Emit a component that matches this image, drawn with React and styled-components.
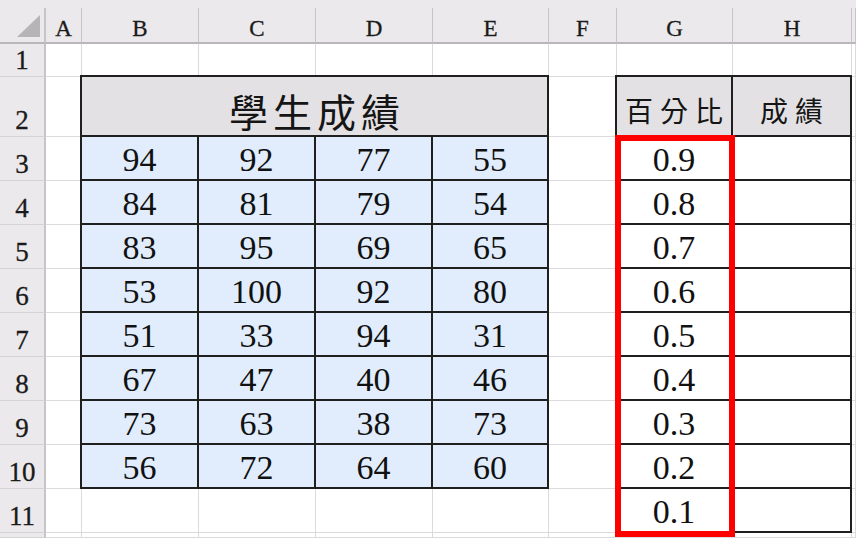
import React from "react";
import styled, { createGlobalStyle, css } from "styled-components";

const Global = createGlobalStyle`
  html, body { margin: 0; padding: 0; background: #ffffff; }
  body { overflow: hidden; }
`;

const DARK = "#1f1f1f";
const GRID = "#dcdadc";
const HEAD_BG = "#ebe9eb";
const HEAD_LINE = "#c6c4c6";

const Sheet = styled.div`
  position: relative;
  width: 856px;
  height: 538px;
  overflow: hidden;
  display: grid;
  grid-template-columns: 46px 36px 117px 117px 117px 116px 68px 116px 119px 1fr;
  grid-template-rows: 8px 36px 33px 60px repeat(9, 44px) 1fr;
  background: #ffffff;
  font-family: "Liberation Serif", "Times New Roman", serif;
  color: #111;
`;

const TopStrip = styled.div`
  grid-column: 1 / -1;
  background: ${HEAD_BG};
`;

const Corner = styled.div`
  background: ${HEAD_BG};
  border-right: 2px solid ${HEAD_LINE};
  border-bottom: 2px solid #b9b7b9;
  box-sizing: border-box;
  display: flex;
  align-items: flex-end;
  justify-content: flex-end;
  padding: 0 4px 5px 0;
`;

const Triangle = styled.div`
  width: 0;
  height: 0;
  border-left: 23px solid transparent;
  border-bottom: 22px solid #b6b4b6;
`;

const ColHead = styled.div`
  background: ${HEAD_BG};
  border-right: 1px solid ${HEAD_LINE};
  border-bottom: 2px solid #b9b7b9;
  box-sizing: border-box;
  display: flex;
  align-items: flex-end;
  justify-content: center;
  padding-bottom: 0;
  font-size: 23px;
  line-height: 26px;
  color: #1a1a1a;
  -webkit-text-stroke: 0.3px #1a1a1a;
`;

const RowHead = styled.div`
  background: ${HEAD_BG};
  border-right: 2px solid ${HEAD_LINE};
  border-bottom: 1px solid #d4d2d4;
  box-sizing: border-box;
  display: flex;
  align-items: flex-end;
  justify-content: center;
  padding-bottom: 2px;
  font-size: 27px;
  line-height: 28px;
  color: #1a1a1a;
  -webkit-text-stroke: 0.3px #1a1a1a;
`;

const fills = {
  title: "#e3e1e4",
  data: "#e1edfc",
  none: "#ffffff",
};

const Cell = styled.div`
  box-sizing: border-box;
  background: ${(p) => fills[p.$fill || "none"]};
  border-right: 1px solid ${GRID};
  border-bottom: 1px solid ${GRID};
  display: flex;
  align-items: flex-end;
  justify-content: center;
  padding-bottom: ${(p) => p.$pb ?? 1}px;
  font-size: 34px;
  line-height: 37px;
  min-width: 0;
  white-space: nowrap;
  ${(p) => p.$span && css`grid-column: span ${p.$span};`}
  ${(p) =>
    p.$box &&
    css`
      border-right: 2px solid ${DARK};
      border-bottom: 2px solid ${DARK};
    `}
  ${(p) =>
    p.$box &&
    (p.$top || p.$left) &&
    css`
      box-shadow: ${p.$left ? "-2px" : "0"} ${p.$top ? "-2px" : "0"} 0 0 ${DARK};
    `}
  ${(p) =>
    p.$box &&
    p.$top &&
    p.$left &&
    css`
      box-shadow: -2px 0 0 0 ${DARK}, 0 -2px 0 0 ${DARK}, -2px -2px 0 0 ${DARK};
    `}
`;

const Cjk = styled.span`
  font-family: "Noto Sans CJK TC", "Noto Sans CJK SC", sans-serif;
  font-size: ${(p) => p.$size}px;
  letter-spacing: ${(p) => p.$gap}px;
  margin-right: -${(p) => p.$gap}px;
  line-height: 1.1;
  color: #151515;
`;

const RedFrame = styled.div`
  position: absolute;
  left: 615px;
  top: 135px;
  width: 120px;
  height: 402px;
  box-sizing: border-box;
  border: 6px solid #ff0000;
  pointer-events: none;
`;

const cols = ["A", "B", "C", "D", "E", "F", "G", "H", ""];

const data = [
  [94, 92, 77, 55],
  [84, 81, 79, 54],
  [83, 95, 69, 65],
  [53, 100, 92, 80],
  [51, 33, 94, 31],
  [67, 47, 40, 46],
  [73, 63, 38, 73],
  [56, 72, 64, 60],
];

const pct = ["0.9", "0.8", "0.7", "0.6", "0.5", "0.4", "0.3", "0.2", "0.1"];

export default function App() {
  const rows = [];

  rows.push(<RowHead key="rh1">1</RowHead>);
  cols.forEach((c, i) => rows.push(<Cell key={`r1${i}`} />));

  rows.push(<RowHead key="rh2">2</RowHead>);
  rows.push(<Cell key="A2" />);
  rows.push(
    <Cell key="B2" $span={4} $fill="title" $box $top $left $pb={3}>
      <Cjk $size={39} $gap={5}>學生成績</Cjk>
    </Cell>
  );
  rows.push(<Cell key="F2" />);
  rows.push(
    <Cell key="G2" $fill="title" $box $top $left $pb={9}>
      <Cjk $size={28} $gap={7}>百分比</Cjk>
    </Cell>
  );
  rows.push(
    <Cell key="H2" $fill="title" $box $top $pb={9}>
      <Cjk $size={28} $gap={7}>成績</Cjk>
    </Cell>
  );
  rows.push(<Cell key="I2" />);

  for (let r = 0; r < 9; r++) {
    const n = r + 3;
    rows.push(<RowHead key={`rh${n}`}>{n}</RowHead>);
    rows.push(<Cell key={`A${n}`} />);
    const d = data[r];
    for (let c = 0; c < 4; c++) {
      if (d) {
        rows.push(
          <Cell key={`d${n}${c}`} $fill="data" $box $left={c === 0}>
            {d[c]}
          </Cell>
        );
      } else {
        rows.push(<Cell key={`d${n}${c}`} />);
      }
    }
    rows.push(<Cell key={`F${n}`} />);
    rows.push(
      <Cell key={`G${n}`} $box $left>
        {pct[r]}
      </Cell>
    );
    rows.push(<Cell key={`H${n}`} $box />);
    rows.push(<Cell key={`I${n}`} />);
  }

  rows.push(<RowHead key="rh12" />);
  cols.forEach((c, i) => rows.push(<Cell key={`r12${i}`} />));

  return (
    <>
      <Global />
      <Sheet>
        <TopStrip />
        <Corner>
          <Triangle />
        </Corner>
        {cols.map((c, i) => (
          <ColHead key={`ch${i}`}>{c}</ColHead>
        ))}
        {rows}
        <RedFrame />
      </Sheet>
    </>
  );
}
